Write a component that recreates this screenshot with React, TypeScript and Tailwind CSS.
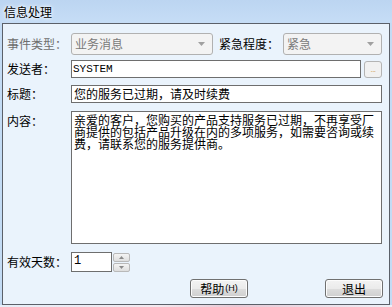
import React from "react";

const font = { fontFamily: '"Noto Sans CJK SC", "Liberation Sans", sans-serif' };

function Arrow({ up = false, color = "#8a8a8a", w = 7, h = 4 }: { up?: boolean; color?: string; w?: number; h?: number }) {
  return (
    <svg width={w} height={h} viewBox={`0 0 ${w} ${h}`}>
      {up ? <path d={`M0 ${h} L${w / 2} 0 L${w} ${h} Z`} fill={color} /> : <path d={`M0 0 L${w} 0 L${w / 2} ${h} Z`} fill={color} />}
    </svg>
  );
}

function Combo({ text, width }: { text: string; width: string }) {
  return (
    <div
      className={`${width} h-[22px] rounded-[3px] border border-[#b1b1b1] bg-[#f3f3f3] flex items-center justify-between pl-[3px] pr-[7px] text-[12px] leading-[12px] text-[#7a7a7a]`}
    >
      <span>{text}</span>
      <Arrow color="#a0a0a0" w={7} h={4} />
    </div>
  );
}

function Btn({ children }: { children: React.ReactNode }) {
  return (
    <div className="w-[58px] h-[19px] rounded-[3px] border border-[#707070] bg-[linear-gradient(#f3f3f3_0%,#ebebeb_50%,#dddddd_51%,#cfcfcf_100%)] flex items-center justify-center text-[12px] leading-[12px] text-black shadow-[inset_0_0_0_1px_#fcfcfc]">
      {children}
    </div>
  );
}

export default function App() {
  return (
    <div className="w-[392px] h-[307px] bg-[#c3dbf4] flex flex-col overflow-hidden" style={font}>
      <div className="h-[23px] shrink-0 flex items-center pl-[4px] bg-[linear-gradient(#bcd5f1,#c6ddf6)]">
        <span className="text-[12px] leading-[12px] text-black [text-shadow:0_0_3px_#ffffff,0_0_5px_#ffffff]">信息处理</span>
      </div>
      <div className="ml-[2px] w-[388px] h-[282px] shrink-0 border border-[#5b6069] bg-[#eaf3fc] flex flex-col pl-[4px] pt-[9px] text-[12px] leading-[12px] text-black">
        {/* Row 1 */}
        <div className="flex items-center h-[22px]">
          <div className="w-[64px] text-[#6e6e6e]">事件类型：</div>
          <Combo text="业务消息" width="w-[142px]" />
          <div className="ml-[6px] w-[64px]">紧急程度：</div>
          <Combo text="紧急" width="w-[99px]" />
        </div>
        {/* Row 2 */}
        <div className="flex items-center h-[18px] mt-[5px]">
          <div className="w-[64px]">发送者：</div>
          <div className="w-[290px] h-[18px] border border-[#6e6e6e] bg-white flex items-center pl-[1px]">
            <span className="text-[11px] leading-[11px]" style={{ fontFamily: '"Liberation Mono", monospace' }}>SYSTEM</span>
          </div>
          <div className="ml-[3px] w-[18px] h-[17px] rounded-[3px] border border-[#b4b4b4] bg-[#f1f1f1] flex items-end justify-center pb-[4px]">
            <span className="text-[8px] leading-[8px] text-[#d8b27a] tracking-[-0.5px]">...</span>
          </div>
        </div>
        {/* Row 3 */}
        <div className="flex items-center h-[18px] mt-[7px]">
          <div className="w-[64px]">标题：</div>
          <div className="w-[311px] h-[18px] border border-[#6e6e6e] bg-white flex items-center pl-[2px]">
            您的服务已过期，请及时续费
          </div>
        </div>
        {/* Row 4 */}
        <div className="flex items-start mt-[8px]">
          <div className="w-[64px] pt-[4px]">内容：</div>
          <div className="w-[311px] h-[133px] border border-[#6e6e6e] bg-white pl-[2px] pt-[2px]">
            <p className="w-[300px] break-all text-[12px] leading-[12px]">
              亲爱的客户，您购买的产品支持服务已过期，不再享受厂商提供的包括产品升级在内的多项服务，如需要咨询或续费，请联系您的服务提供商。
            </p>
          </div>
        </div>
        {/* Row 5 */}
        <div className="flex items-center h-[20px] mt-[8px]">
          <div className="w-[64px]">有效天数：</div>
          <div className="w-[41px] h-[20px] border border-[#6e6e6e] bg-white flex items-start pl-[2px] pt-[2px]">
            <span className="text-[12px] leading-[12px]" style={{ fontFamily: '"Liberation Mono", monospace' }}>1</span>
          </div>
          <div className="ml-[1px] flex flex-col gap-[1px]">
            <div className="w-[17px] h-[9px] rounded-[2px] border border-[#b9b9b9] bg-[linear-gradient(#f4f4f4,#dedede)] flex items-center justify-center">
              <Arrow up color="#8a8a8a" w={5} h={3} />
            </div>
            <div className="w-[17px] h-[9px] rounded-[2px] border border-[#b9b9b9] bg-[linear-gradient(#f4f4f4,#dedede)] flex items-center justify-center">
              <Arrow color="#8a8a8a" w={5} h={3} />
            </div>
          </div>
        </div>
        {/* Buttons */}
        <div className="flex items-center mt-[7px] pl-[183px]">
          <Btn>
            <span>帮助</span>
            <span className="text-[9px] leading-[9px] ml-[1px]" style={{ fontFamily: '"Liberation Sans", sans-serif' }}>(H)</span>
          </Btn>
          <div className="ml-[77px]">
            <Btn>退出</Btn>
          </div>
        </div>
      </div>
      <div className="flex-1 bg-[linear-gradient(90deg,#e6eef8_0%,#f3e8ee_40%,#e8c9d6_60%,#eef0f7_100%)]" />
    </div>
  );
}
